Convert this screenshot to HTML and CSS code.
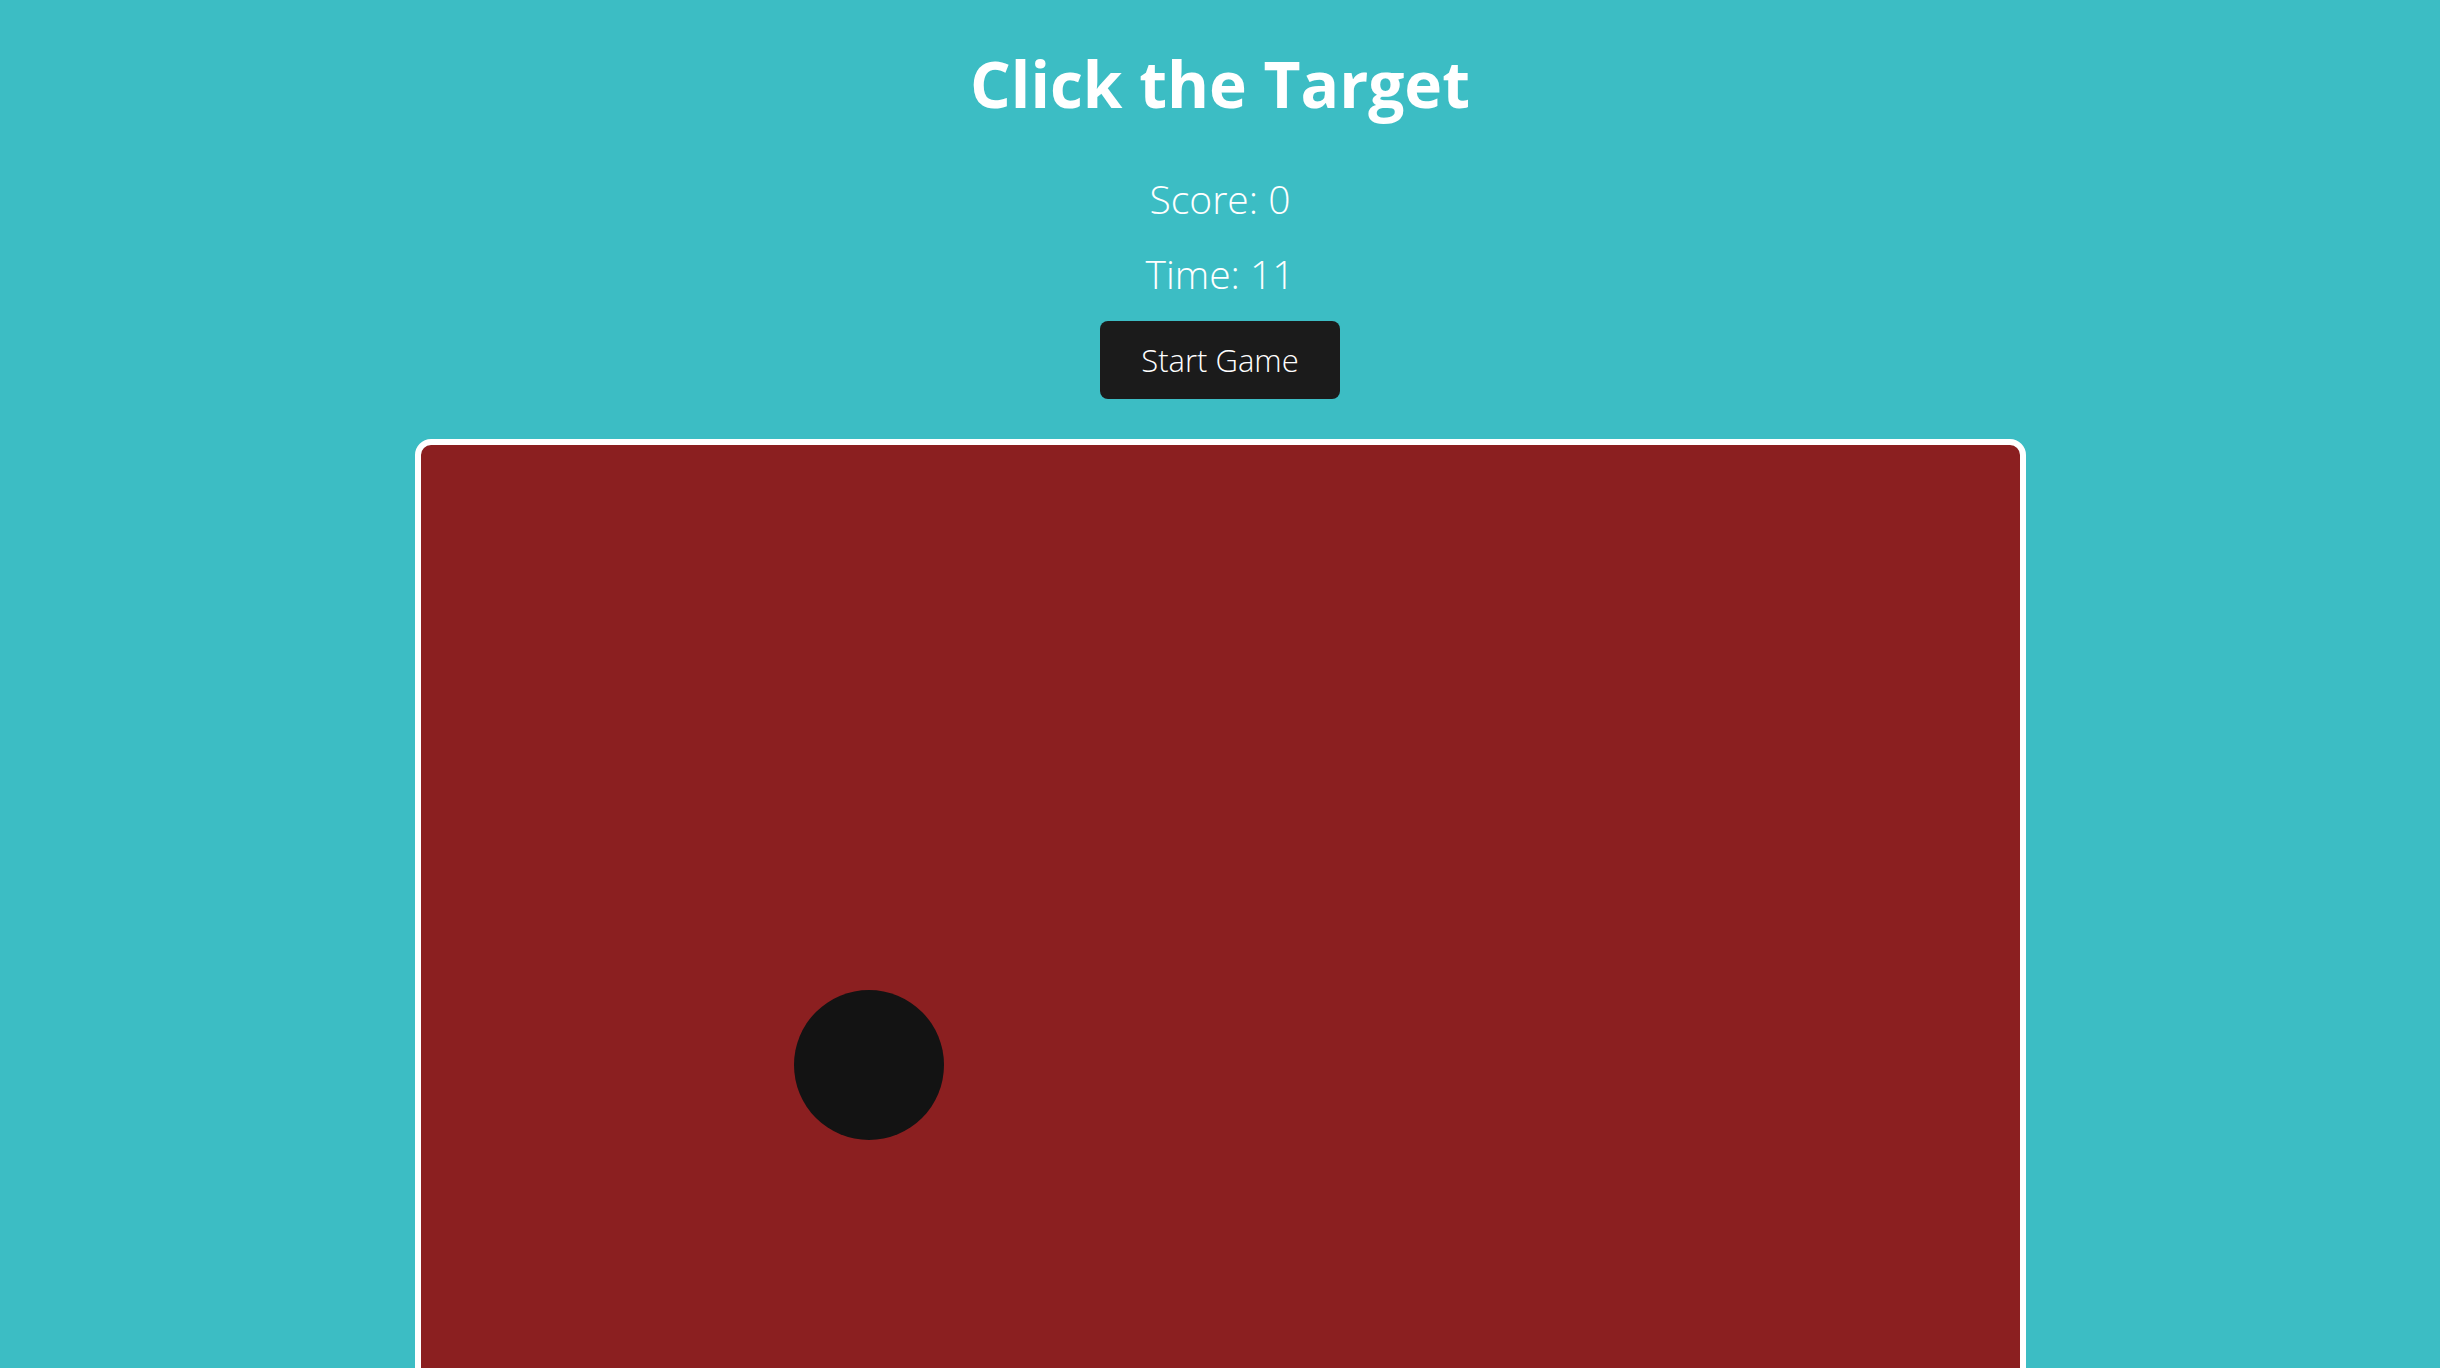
FILE: index.html
```html
<!DOCTYPE html>
<html lang="en">
<head>
<meta charset="utf-8">
<title>Click the Target</title>
<link rel="stylesheet" href="styles.css">
</head>
<body>
<main class="page">
  <h1 class="title">Click the Target</h1>
  <p class="stat">Score: 0</p>
  <p class="stat stat-time">Time: 11</p>
  <button class="start-btn" type="button">Start Game</button>
  <div class="board">
    <div class="target"></div>
  </div>
</main>
</body>
</html>
```
FILE: styles.css
```css
html, body {
  margin: 0;
  padding: 0;
  overflow: hidden;
  height: 100%;
}
body {
  background: #3cbdc4;
  color: #ffffff;
  font-family: "Open Sans", "Noto Sans", sans-serif;
}
.page {
  display: flex;
  flex-direction: column;
  align-items: center;
}
.title {
  margin: 40px 0 0;
  font-size: 64px;
  line-height: 88px;
  font-weight: 700;
}
.stat {
  margin: 45px 0 0;
  font-size: 39px;
  line-height: 52px;
  font-weight: 300;
}
.stat-time {
  margin-top: 23px;
}
.start-btn {
  margin-top: 21px;
  width: 240px;
  height: 78px;
  display: flex;
  align-items: center;
  justify-content: center;
  background: #1b1b1b;
  color: #ffffff;
  border: none;
  border-radius: 8px;
  font-family: "Open Sans", "Noto Sans", sans-serif;
  font-size: 31px;
  font-weight: 300;
  padding: 0;
}
.board {
  position: relative;
  margin-top: 40px;
  width: 1599px;
  height: 1000px;
  background: #8b1f20;
  border: 6px solid #ffffff;
  border-radius: 16px;
  flex-shrink: 0;
}
.target {
  position: absolute;
  left: 373px;
  top: 545px;
  width: 150px;
  height: 150px;
  border-radius: 50%;
  background: #131313;
}
```
